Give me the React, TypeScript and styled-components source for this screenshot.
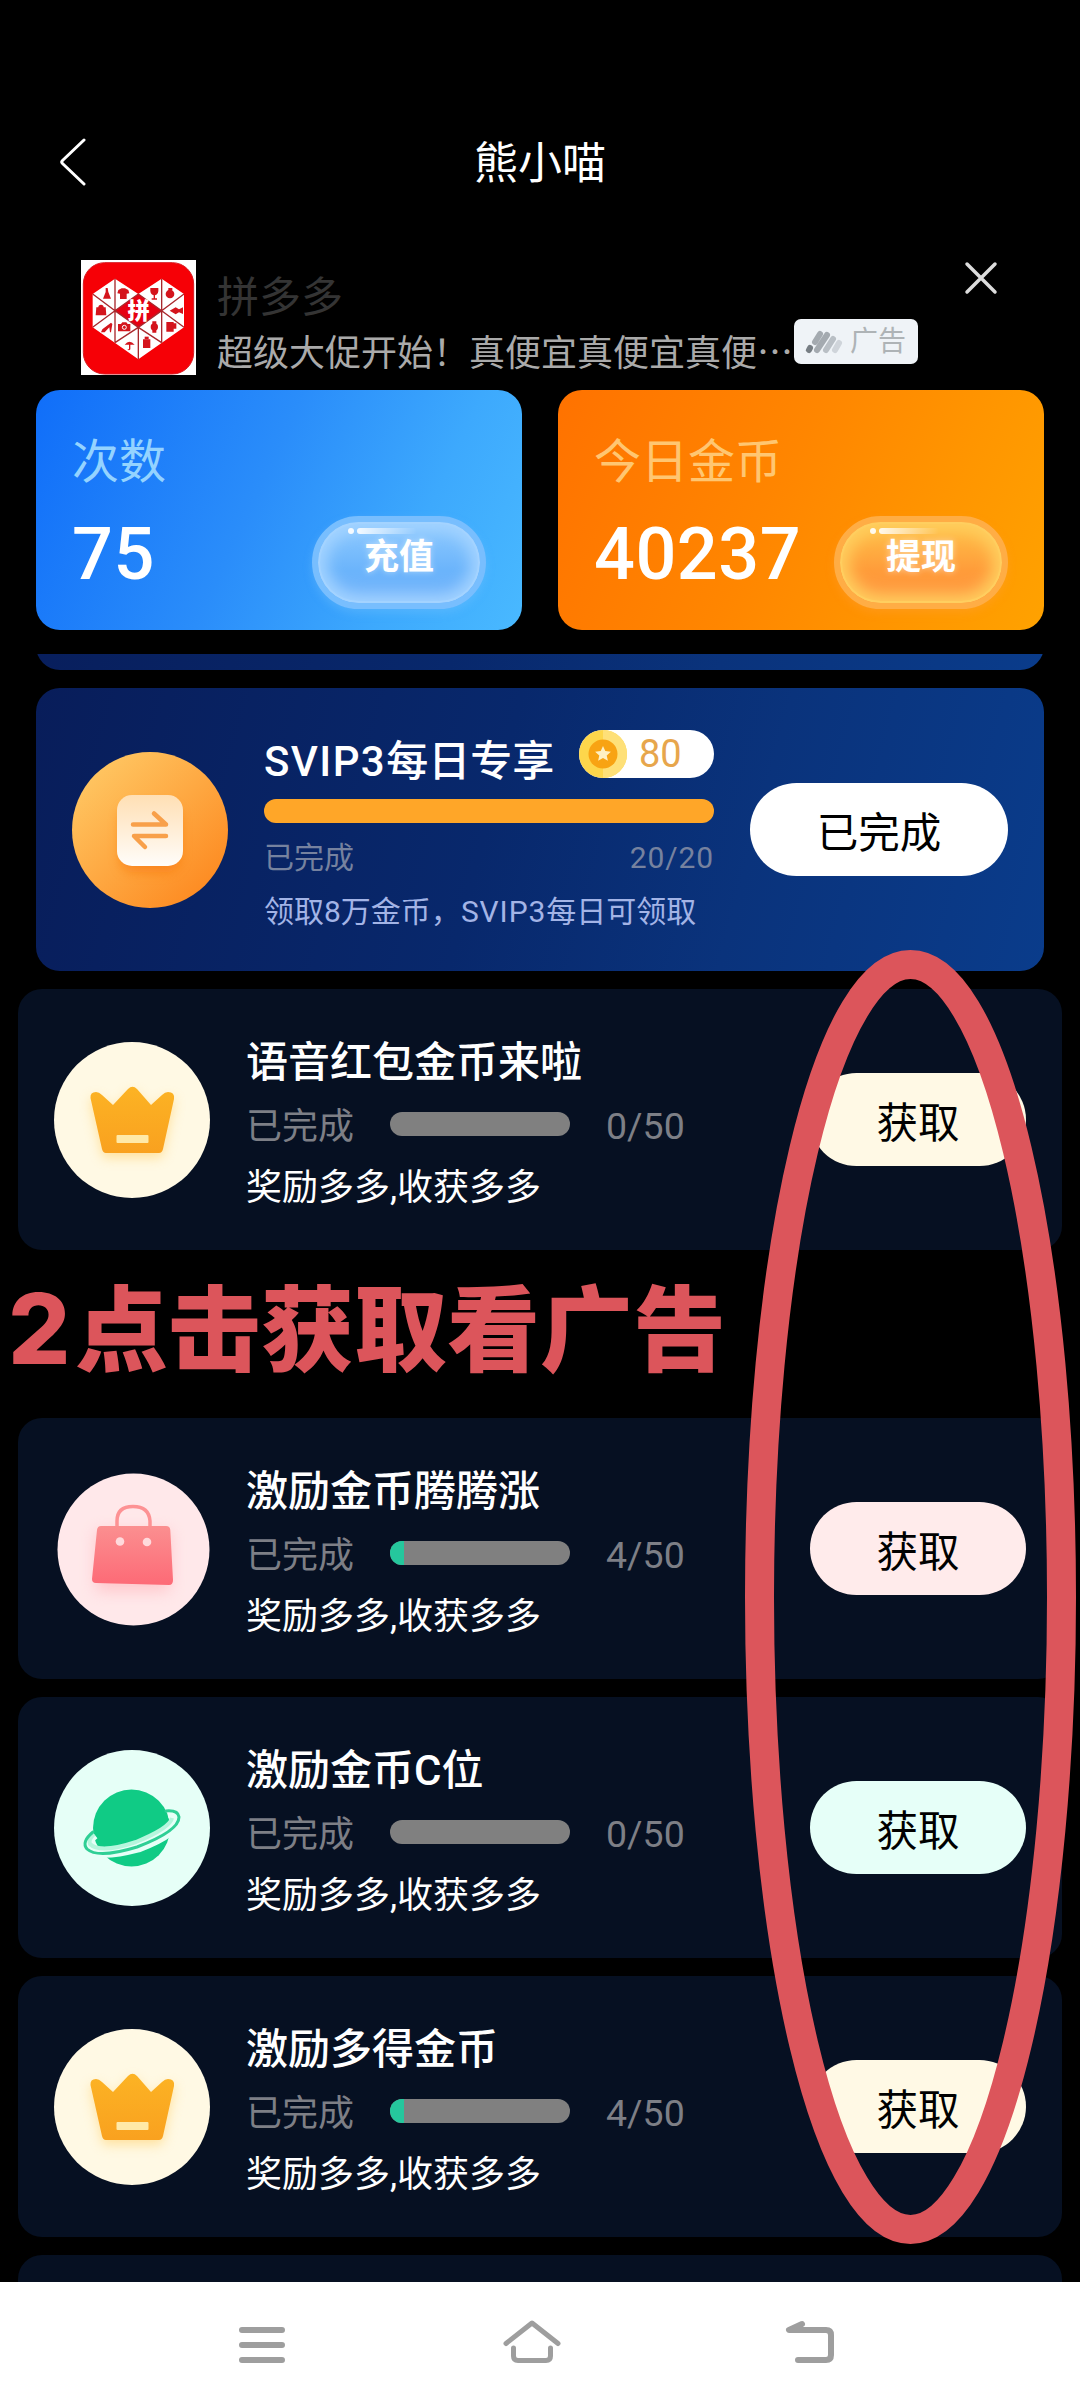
import React from "react";
import styled, { createGlobalStyle, css } from "styled-components";

const GlobalStyle = createGlobalStyle`
  * { box-sizing: border-box; }
  body { margin: 0; background: #000; }
`;

const Screen = styled.main`
  position: relative;
  display: flex;
  flex-direction: column;
  width: 1080px;
  height: 2408px;
  overflow: hidden;
  background: #000;
  color: #fff;
  font-family: Roboto, "Noto Sans CJK SC", sans-serif;
  font-weight: 400;
  svg { display: block; flex: none; }
`;

const Header = styled.header`
  display: grid;
  grid-template-columns: 90px 1fr 90px;
  align-items: center;
  height: 108px;
  margin-top: 108px;
  padding: 0 30px;
`;

const BackButton = styled.button`
  padding: 0 0 0 29px;
  border: 0;
  background: none;
`;

const Title = styled.h1`
  margin: 0;
  padding-top: 4px;
  text-align: center;
  font-size: 44px;
  line-height: 60px;
  font-weight: 400;
`;

const AdBanner = styled.section`
  display: flex;
  align-items: flex-start;
  height: 174px;
  padding: 44px 81px 0;
`;

const AdText = styled.div`
  display: flex;
  flex-direction: column;
  margin: 8px 0 0 21px;
`;

const AdName = styled.div`
  color: #343434;
  font-size: 42px;
  line-height: 60px;
`;

const AdLine = styled.div`
  display: flex;
  align-items: center;
  height: 45px;
  margin-top: -9px;
`;

const AdSlogan = styled.span`
  width: 577px;
  padding-top: 18px;
  color: #aaa;
  font-size: 36px;
  line-height: 45px;
  white-space: nowrap;
  font-family: "Noto Sans CJK SC", sans-serif;
`;

const AdBadge = styled.span`
  display: flex;
  align-items: center;
  gap: 6px;
  width: 124px;
  height: 45px;
  padding-left: 11px;
  border-radius: 7px;
  background: #eff3f7;
  color: #aeb3b6;
  font-size: 28px;
  line-height: 45px;
  white-space: nowrap;
`;

const CloseButton = styled.button`
  margin: 1px 0 0 46px;
  padding: 0;
  border: 0;
  background: none;
`;

const Stats = styled.section`
  display: grid;
  grid-template-columns: 1fr 1fr;
  gap: 36px;
  height: 240px;
  padding: 0 36px;
`;

type Tone = "blue" | "orange";

const StatCard = styled.article<{ $tone: Tone }>`
  display: flex;
  flex-direction: column;
  padding: 42px 36px 0;
  border-radius: 24px;
  background: ${(p) =>
    p.$tone === "blue"
      ? "linear-gradient(115deg, #106ef9 0%, #2a8dfa 45%, #3da9fd 75%, #49b9ff 100%)"
      : "linear-gradient(115deg, #ff7200 0%, #ff8600 45%, #ff9600 75%, #ffa200 100%)"};
`;

const StatLabel = styled.div<{ $tone: Tone }>`
  color: ${(p) => (p.$tone === "blue" ? "#94d3ff" : "#ffc671")};
  font-size: 47px;
  line-height: 60px;
`;

const StatRow = styled.div`
  display: flex;
  justify-content: space-between;
  margin-top: 19px;
`;

const StatValue = styled.div`
  margin-top: 2px;
  font-size: 72px;
  line-height: 84px;
  font-weight: 500;
  letter-spacing: 0.5px;
`;

const glass = {
  blue: css`
    border-color: #78befe;
    background: linear-gradient(#8fcaff, #6bb4fb 60%, #72b2fb);
    box-shadow: inset 0 0 15px 9px #a3d3ff, inset 0 0 0 2px #a9d4ff, 0 4px 9px rgba(120, 195, 255, 0.35);
  `,
  orange: css`
    border-color: #ffad45;
    background: linear-gradient(#ffc34b, #ff9c3a 60%, #ff9440);
    box-shadow: inset 0 0 15px 9px #ffce5e, inset 0 0 0 2px #ffd069, 0 4px 9px rgba(255, 160, 60, 0.35);
  `,
};

const GlassButton = styled.button<{ $tone: Tone }>`
  display: flex;
  flex-direction: column;
  align-items: center;
  width: 174px;
  height: 93px;
  margin: 5px 0 0;
  padding: 6px 0 0;
  border: 6px solid;
  border-radius: 47px;
  background-clip: padding-box;
  color: #fff;
  font-family: inherit;
  font-size: 35px;
  line-height: 48px;
  font-weight: 700;
  text-shadow: 0 0 6px rgba(255, 255, 255, 0.5);
  ${(p) => glass[p.$tone]}
`;

const Shine = styled.span`
  display: flex;
  gap: 3px;
  align-self: flex-start;
  margin-left: 30px;
  height: 6px;
  &::before, &::after {
    content: "";
    width: 6px;
    height: 6px;
    border-radius: 3px;
    background: #fff;
    opacity: 0.9;
  }
  &::after {
    width: 60px;
    background: linear-gradient(90deg, #fff, rgba(255, 255, 255, 0));
  }
`;

const TaskList = styled.section`
  display: flex;
  flex-direction: column;
  gap: 18px;
  height: 1628px;
  margin-top: 24px;
  overflow: hidden;
`;

const VipCard = styled.article`
  display: flex;
  flex: none;
  align-items: center;
  gap: 36px;
  height: 283px;
  margin: 0 36px;
  padding: 0 36px;
  border-radius: 24px;
  background: linear-gradient(105deg, #081d5a 0%, #08286c 45%, #0a337c 70%, #0a3c8b 100%);
`;

const ScrolledCard = styled(VipCard)`
  margin-top: -267px;
`;

const VipBody = styled.div`
  width: 450px;
`;

const VipHead = styled.div`
  display: flex;
  justify-content: space-between;
  height: 48px;
`;

const VipTitle = styled.h2`
  margin: 2px 0 0;
  font-size: 42px;
  line-height: 60px;
  font-weight: 500;
  white-space: nowrap;
`;

const Latin = styled.span<{ $gap: number }>`
  letter-spacing: ${(p) => p.$gap}px;
`;

const CoinPill = styled.span`
  display: flex;
  align-items: center;
  gap: 12px;
  width: 135px;
  height: 48px;
  border-radius: 24px;
  background: #fff;
  color: #e7a64c;
  font-size: 38px;
  line-height: 52px;
`;

const VipTrack = styled.div`
  height: 24px;
  margin-top: 21px;
  border-radius: 12px;
  background: #ffa628;
`;

const VipMeta = styled.div`
  display: flex;
  justify-content: space-between;
  margin-top: 17px;
  color: #76829f;
  font-size: 30px;
  line-height: 36px;
`;

const VipNote = styled.div`
  margin-top: 17px;
  color: #a3b4e6;
  font-size: 30px;
  line-height: 37px;
  white-space: nowrap;
`;

const PillButton = styled.button<{ $width: number; $bg: string }>`
  flex: none;
  width: ${(p) => p.$width}px;
  height: 93px;
  margin-left: auto;
  padding: 8px 0 0;
  border: 0;
  border-radius: 47px;
  background: ${(p) => p.$bg};
  color: #000;
  font-family: inherit;
  font-size: 41.5px;
  line-height: 60px;
`;

const TaskCard = styled.article`
  display: flex;
  flex: none;
  align-items: center;
  gap: 36px;
  height: 261px;
  margin: 0 18px;
  padding: 0 36px;
  border-radius: 24px;
  background: #061022;
`;

const TaskBody = styled.div`
  align-self: flex-start;
  margin-top: 45px;
`;

const TaskTitle = styled.h2`
  margin: 0;
  font-size: 42px;
  line-height: 58px;
  font-weight: 500;
`;

const TaskProgress = styled.div`
  display: flex;
  align-items: center;
  height: 48px;
  margin-top: 8px;
  color: #7d7f86;
  font-size: 36px;
`;

const TaskState = styled.span`
  width: 144px;
  padding-top: 5px;
  line-height: 48px;
`;

const Track = styled.span`
  width: 180px;
  height: 24px;
  margin-right: 36px;
  border-radius: 12px;
  overflow: hidden;
  background: #808080;
`;

const TrackFill = styled.span`
  display: block;
  height: 24px;
  background: #25c79d;
`;

const TaskCount = styled.span`
  padding-top: 4px;
  font-size: 37.5px;
  line-height: 48px;
`;

const TaskNote = styled.div`
  margin-top: 18px;
  font-size: 36px;
  line-height: 45px;
`;

const HintRow = styled.div`
  display: flex;
  flex: none;
  align-items: baseline;
  height: 132px;
  padding-left: 8px;
  color: #dc555b;
  font-family: "Noto Sans CJK SC", sans-serif;
  font-size: 93px;
  line-height: 111px;
  font-weight: 900;
  white-space: nowrap;
`;

const HintNumber = styled.span`
  width: 67px;
  font-family: Inter, sans-serif;
  font-size: 98px;
  font-weight: 800;
`;

const SystemNav = styled.nav`
  display: grid;
  grid-template-columns: 270px 270px 286px;
  justify-content: center;
  height: 126px;
  padding-top: 36px;
  background: #fff;
  svg { margin: 0 auto; }
`;

const Annotation = styled.svg`
  position: absolute;
  left: 740px;
  top: 945px;
  pointer-events: none;
`;

function PddLogo() {
  return (
    <svg width="115" height="115" viewBox="0 0 345 345">
      <rect width="345" height="345" fill="#fff" />
      <rect x="7" y="8" width="331" height="334" rx="64" fill="#f60006" stroke="#d81b22" strokeWidth="3" />
      <path d="M102 56 35 102V202L172 298 309 202V102L242 56 172 102Z" fill="#fff" />
      <path d="M172 102 242 152 172 202 102 152Z" fill="#e60012" />
      <path
        d="M102 56V248M242 56V248M172 202V298M35 102 102 152 35 202M309 102 242 152 309 202M172 102 102 152 172 202 242 152ZM102 248 172 202 242 248"
        fill="none"
        stroke="#a9272c"
        strokeWidth="4"
      />
      <g fill="#d4141c">
        <path d="M74 84h6l2 12 8 20H66l8-20ZM112 90l10-5h10l10 5 3 10-8 1v16h-20v-16l-8-1Z" />
        <path d="M208 84h24q2 20-10 22v9h6v4h-16v-4h6v-9q-12-2-10-22Z" />
        <circle cx="267" cy="102" r="13" />
        <path d="M262 84h12v6h-12Z" />
        <path d="M46 142h28l2 24H44Z" />
        <circle cx="60" cy="142" r="8" />
        <path d="M266 152l18-10 10 6 12-6v20l-12-5-10 6Z" />
        <path d="M64 208 90 188l4 4-4 25h-3l-2-15-14 15H60Z" />
        <path d="M111 192h9l4-5h12l4 5h8v22h-37Z" />
        <circle cx="220" cy="201" r="11" />
        <path d="M214 184h12v34h-12ZM256 186h22v4h8v16h-8v9h-22Z" />
        <path d="M131 254q14-18 30 0ZM144 252h4v16q-4 6-9 0h5ZM186 238h22v26h-22Z" />
        <path d="M191 230h12v8h-12Z" />
      </g>
      <circle cx="130" cy="202" r="6" fill="none" stroke="#fff" strokeWidth="3" />
      <text
        x="173"
        y="177"
        textAnchor="middle"
        fontFamily="Noto Sans CJK SC, sans-serif"
        fontSize="67"
        fontWeight="900"
        fill="#fff"
      >
        拼
      </text>
    </svg>
  );
}

function StripesIcon() {
  return (
    <svg width="39" height="24" viewBox="0 0 39 24" fill="none" strokeWidth="6" strokeLinecap="round">
      <path d="M4 20 5 18" stroke="#777e84" />
      <path d="M10 12 15 4M12 20 22 5" stroke="#a4aab0" />
      <path d="M21 20 28 9" stroke="#b9bfc5" />
      <path d="M30 20 34 13" stroke="#cfd4da" />
    </svg>
  );
}

function CoinIcon() {
  return (
    <svg width="48" height="48" viewBox="0 0 48 48">
      <circle cx="24" cy="24" r="24" fill="#fdd64b" />
      <path d="M24 0a24 24 0 0 1 0 48Z" fill="#fee078" />
      <circle cx="24" cy="24" r="14.5" fill="#f8a313" />
      <path
        d="m24 16 2.3 5.1 5.6.6-4.2 3.7 1.2 5.4-4.9-2.8-4.9 2.8 1.2-5.4-4.2-3.7 5.6-.6Z"
        fill="#fff0c4"
      />
    </svg>
  );
}

function ExchangeIcon() {
  return (
    <svg width="156" height="156" viewBox="0 0 156 156">
      <defs>
        <linearGradient id="exBg" x1="0.1" y1="0.1" x2="0.85" y2="0.9">
          <stop offset="0" stopColor="#ffc763" />
          <stop offset="1" stopColor="#fd8b22" />
        </linearGradient>
        <linearGradient id="exCard" x1="0" y1="0" x2="0" y2="1">
          <stop offset="0" stopColor="#ffdfb4" />
          <stop offset="1" stopColor="#fffdfa" />
        </linearGradient>
        <filter id="exShadow" x="-40%" y="-40%" width="180%" height="180%">
          <feGaussianBlur stdDeviation="6" />
        </filter>
      </defs>
      <circle cx="78" cy="78" r="78" fill="url(#exBg)" />
      <rect x="48" y="54" width="60" height="66" rx="14" fill="#f7760e" opacity="0.6" filter="url(#exShadow)" />
      <rect x="45" y="43" width="66" height="71" rx="15" fill="url(#exCard)" />
      <path
        d="M61 72.500H94L82 61.500M94 84H62L73 95"
        fill="none"
        stroke="#f8a04a"
        strokeWidth="4.500"
        strokeLinecap="round"
        strokeLinejoin="round"
      />
    </svg>
  );
}

function CrownIcon({ id }: { id: string }) {
  const shape =
    "M36.500 56Q36 50 42 50Q45 50 48 53L59 63L74 47Q78.500 42.500 83 47L97 63L108 53Q111 50 114 50Q121 50 120 57L109 107Q108 111 105 111H52Q49 111 48 107Z";
  return (
    <svg width="156" height="156" viewBox="0 0 156 156">
      <defs>
        <linearGradient id={`${id}g`} x1="0" y1="0" x2="0" y2="1">
          <stop offset="0" stopColor="#fcb324" />
          <stop offset="1" stopColor="#f9a11f" />
        </linearGradient>
        <filter id={`${id}s`} x="-30%" y="-30%" width="160%" height="160%">
          <feGaussianBlur stdDeviation="6" />
        </filter>
      </defs>
      <circle cx="78" cy="78" r="78" fill="#fff9e4" />
      <path d={shape} fill="#ffca5a" opacity="0.5" filter={`url(#${id}s)`} transform="translate(0 5)" />
      <path d={shape} fill={`url(#${id}g)`} />
      <rect x="62.500" y="93" width="32" height="8" rx="1" fill="#ffe9a8" />
    </svg>
  );
}

function BagIcon() {
  return (
    <svg width="156" height="156" viewBox="0 0 156 156">
      <defs>
        <linearGradient id="bagBody" x1="0" y1="0" x2="0" y2="1">
          <stop offset="0" stopColor="#fb8f90" />
          <stop offset="1" stopColor="#fd6a76" />
        </linearGradient>
        <filter id="bagShadow" x="-30%" y="-30%" width="160%" height="160%">
          <feGaussianBlur stdDeviation="8" />
        </filter>
      </defs>
      <circle cx="79.500" cy="78.500" r="76" fill="#ffe8ea" />
      <rect x="42" y="60" width="74" height="60" fill="#fe9da3" opacity="0.45" filter="url(#bagShadow)" />
      <path d="M63 56V50Q63 35.500 79 35.500T96 50V56" fill="none" stroke="#fd9294" strokeWidth="3.500" />
      <path d="M47 55H112Q116 55 116.300 59L119 109Q119 114 115 114L42 112Q38 112 38 108L43 59Q43.500 55 47 55Z" fill="url(#bagBody)" />
      <circle cx="66" cy="70.500" r="4.300" fill="#ffdadc" />
      <circle cx="93" cy="71" r="4.300" fill="#ffdadc" />
    </svg>
  );
}

function PlanetIcon() {
  return (
    <svg width="156" height="156" viewBox="0 0 156 156">
      <circle cx="78" cy="78" r="78" fill="#e6fff7" />
      <circle cx="77.500" cy="78" r="38.500" fill="#10cb85" />
      <path d="M40 84Q30 92 33 97Q42 108 84 97Q124 82 124 68Q123 62 114 62" fill="none" stroke="#e6fff7" strokeWidth="11" />
      <path d="M40 84Q34 90 36 94Q46 104 82 92Q116 78 118 68" fill="none" stroke="#b6f6dd" strokeWidth="4" />
      <path
        d="M39 82Q27 92 33 99Q44 109 83 97Q125 81 125 67Q124 60 112 61"
        fill="none"
        stroke="#2fcf95"
        strokeWidth="3"
        strokeLinecap="round"
      />
    </svg>
  );
}

interface Task {
  title: string;
  done: number;
  tint: string;
  icon: React.ReactNode;
}

const TOTAL = 50;

const firstTask: Task = {
  title: "语音红包金币来啦",
  done: 0,
  tint: "#fff9e5",
  icon: <CrownIcon id="crownA" />,
};

const moreTasks: Task[] = [
  { title: "激励金币腾腾涨", done: 4, tint: "#ffebeb", icon: <BagIcon /> },
  { title: "激励金币C位", done: 0, tint: "#e6fff8", icon: <PlanetIcon /> },
  { title: "激励多得金币", done: 4, tint: "#fff9e5", icon: <CrownIcon id="crownB" /> },
];

function TaskItem({ task }: { task: Task }) {
  return (
    <TaskCard>
      {task.icon}
      <TaskBody>
        <TaskTitle>{task.title}</TaskTitle>
        <TaskProgress>
          <TaskState>已完成</TaskState>
          <Track>
            <TrackFill style={{ width: `${(task.done / TOTAL) * 100}%` }} />
          </Track>
          <TaskCount>
            {task.done}/{TOTAL}
          </TaskCount>
        </TaskProgress>
        <TaskNote>奖励多多,收获多多</TaskNote>
      </TaskBody>
      <PillButton $width={216} $bg={task.tint}>获取</PillButton>
    </TaskCard>
  );
}

function Stat({ tone, label, value, action }: { tone: Tone; label: string; value: string; action: string }) {
  return (
    <StatCard $tone={tone}>
      <StatLabel $tone={tone}>{label}</StatLabel>
      <StatRow>
        <StatValue>{value}</StatValue>
        <GlassButton $tone={tone}>
          <Shine />
          {action}
        </GlassButton>
      </StatRow>
    </StatCard>
  );
}

export default function App() {
  return (
    <>
      <GlobalStyle />
      <Screen>
        <Header>
          <BackButton aria-label="返回">
            <svg width="28" height="48" viewBox="0 0 28 48" fill="none" stroke="#fff" strokeWidth="3" strokeLinecap="round" strokeLinejoin="round">
              <path d="M25 2 3.500 22.500Q2 24 3.500 25.500L25 46" />
            </svg>
          </BackButton>
          <Title>熊小喵</Title>
        </Header>

        <AdBanner>
          <PddLogo />
          <AdText>
            <AdName>拼多多</AdName>
            <AdLine>
              <AdSlogan>超级大促开始！真便宜真便宜真便…</AdSlogan>
              <AdBadge>
                <StripesIcon />
                广告
              </AdBadge>
            </AdLine>
          </AdText>
          <CloseButton aria-label="关闭">
            <svg width="34" height="34" viewBox="0 0 34 34" fill="none" stroke="#dcdcdc" strokeWidth="3.500" strokeLinecap="round">
              <path d="M3 3 31 31M31 3 3 31" />
            </svg>
          </CloseButton>
        </AdBanner>

        <Stats>
          <Stat tone="blue" label="次数" value="75" action="充值" />
          <Stat tone="orange" label="今日金币" value="40237" action="提现" />
        </Stats>

        <TaskList>
          <ScrolledCard />
          <VipCard>
            <ExchangeIcon />
            <VipBody>
              <VipHead>
                <VipTitle>
                  <Latin $gap={1.4}>SVIP3</Latin>每日专享
                </VipTitle>
                <CoinPill>
                  <CoinIcon />
                  80
                </CoinPill>
              </VipHead>
              <VipTrack />
              <VipMeta>
                <span>已完成</span>
                <Latin $gap={0.9}>20/20</Latin>
              </VipMeta>
              <VipNote>
                领取8万金币，<Latin $gap={0.9}>SVIP3</Latin>每日可领取
              </VipNote>
            </VipBody>
            <PillButton $width={258} $bg="#fff">已完成</PillButton>
          </VipCard>

          <TaskItem task={firstTask} />
          <HintRow>
            <HintNumber>2</HintNumber>
            <span>点击获取看广告</span>
          </HintRow>
          {moreTasks.map((task) => (
            <TaskItem key={task.title} task={task} />
          ))}
          <TaskCard />
        </TaskList>

        <SystemNav>
          <svg width="60" height="54" viewBox="0 0 60 54" fill="none" stroke="#9e9e9e" strokeWidth="6" strokeLinecap="round">
            <path d="M10 12H50M10 27H50M10 42H50" />
          </svg>
          <svg width="60" height="54" viewBox="0 0 60 54" fill="none" stroke="#9e9e9e" strokeWidth="5" strokeLinecap="round" strokeLinejoin="round">
            <path d="M4 25.500 30 5 56 25.500M11.500 30V38Q11.500 42.500 16 42.500H44Q48.500 42.500 48.500 38V30" />
          </svg>
          <svg width="60" height="54" viewBox="0 0 60 54" fill="none" stroke="#9e9e9e" strokeWidth="6" strokeLinecap="round" strokeLinejoin="round">
            <path d="M22 6 9 12H46Q51 12 51 17V37Q51 42 46 42H18" />
          </svg>
        </SystemNav>

        <Annotation width="340" height="1304" viewBox="0 0 340 1304">
          <ellipse cx="170.500" cy="652" rx="151" ry="632.500" fill="none" stroke="#dc555b" strokeWidth="29" />
        </Annotation>
      </Screen>
    </>
  );
}
